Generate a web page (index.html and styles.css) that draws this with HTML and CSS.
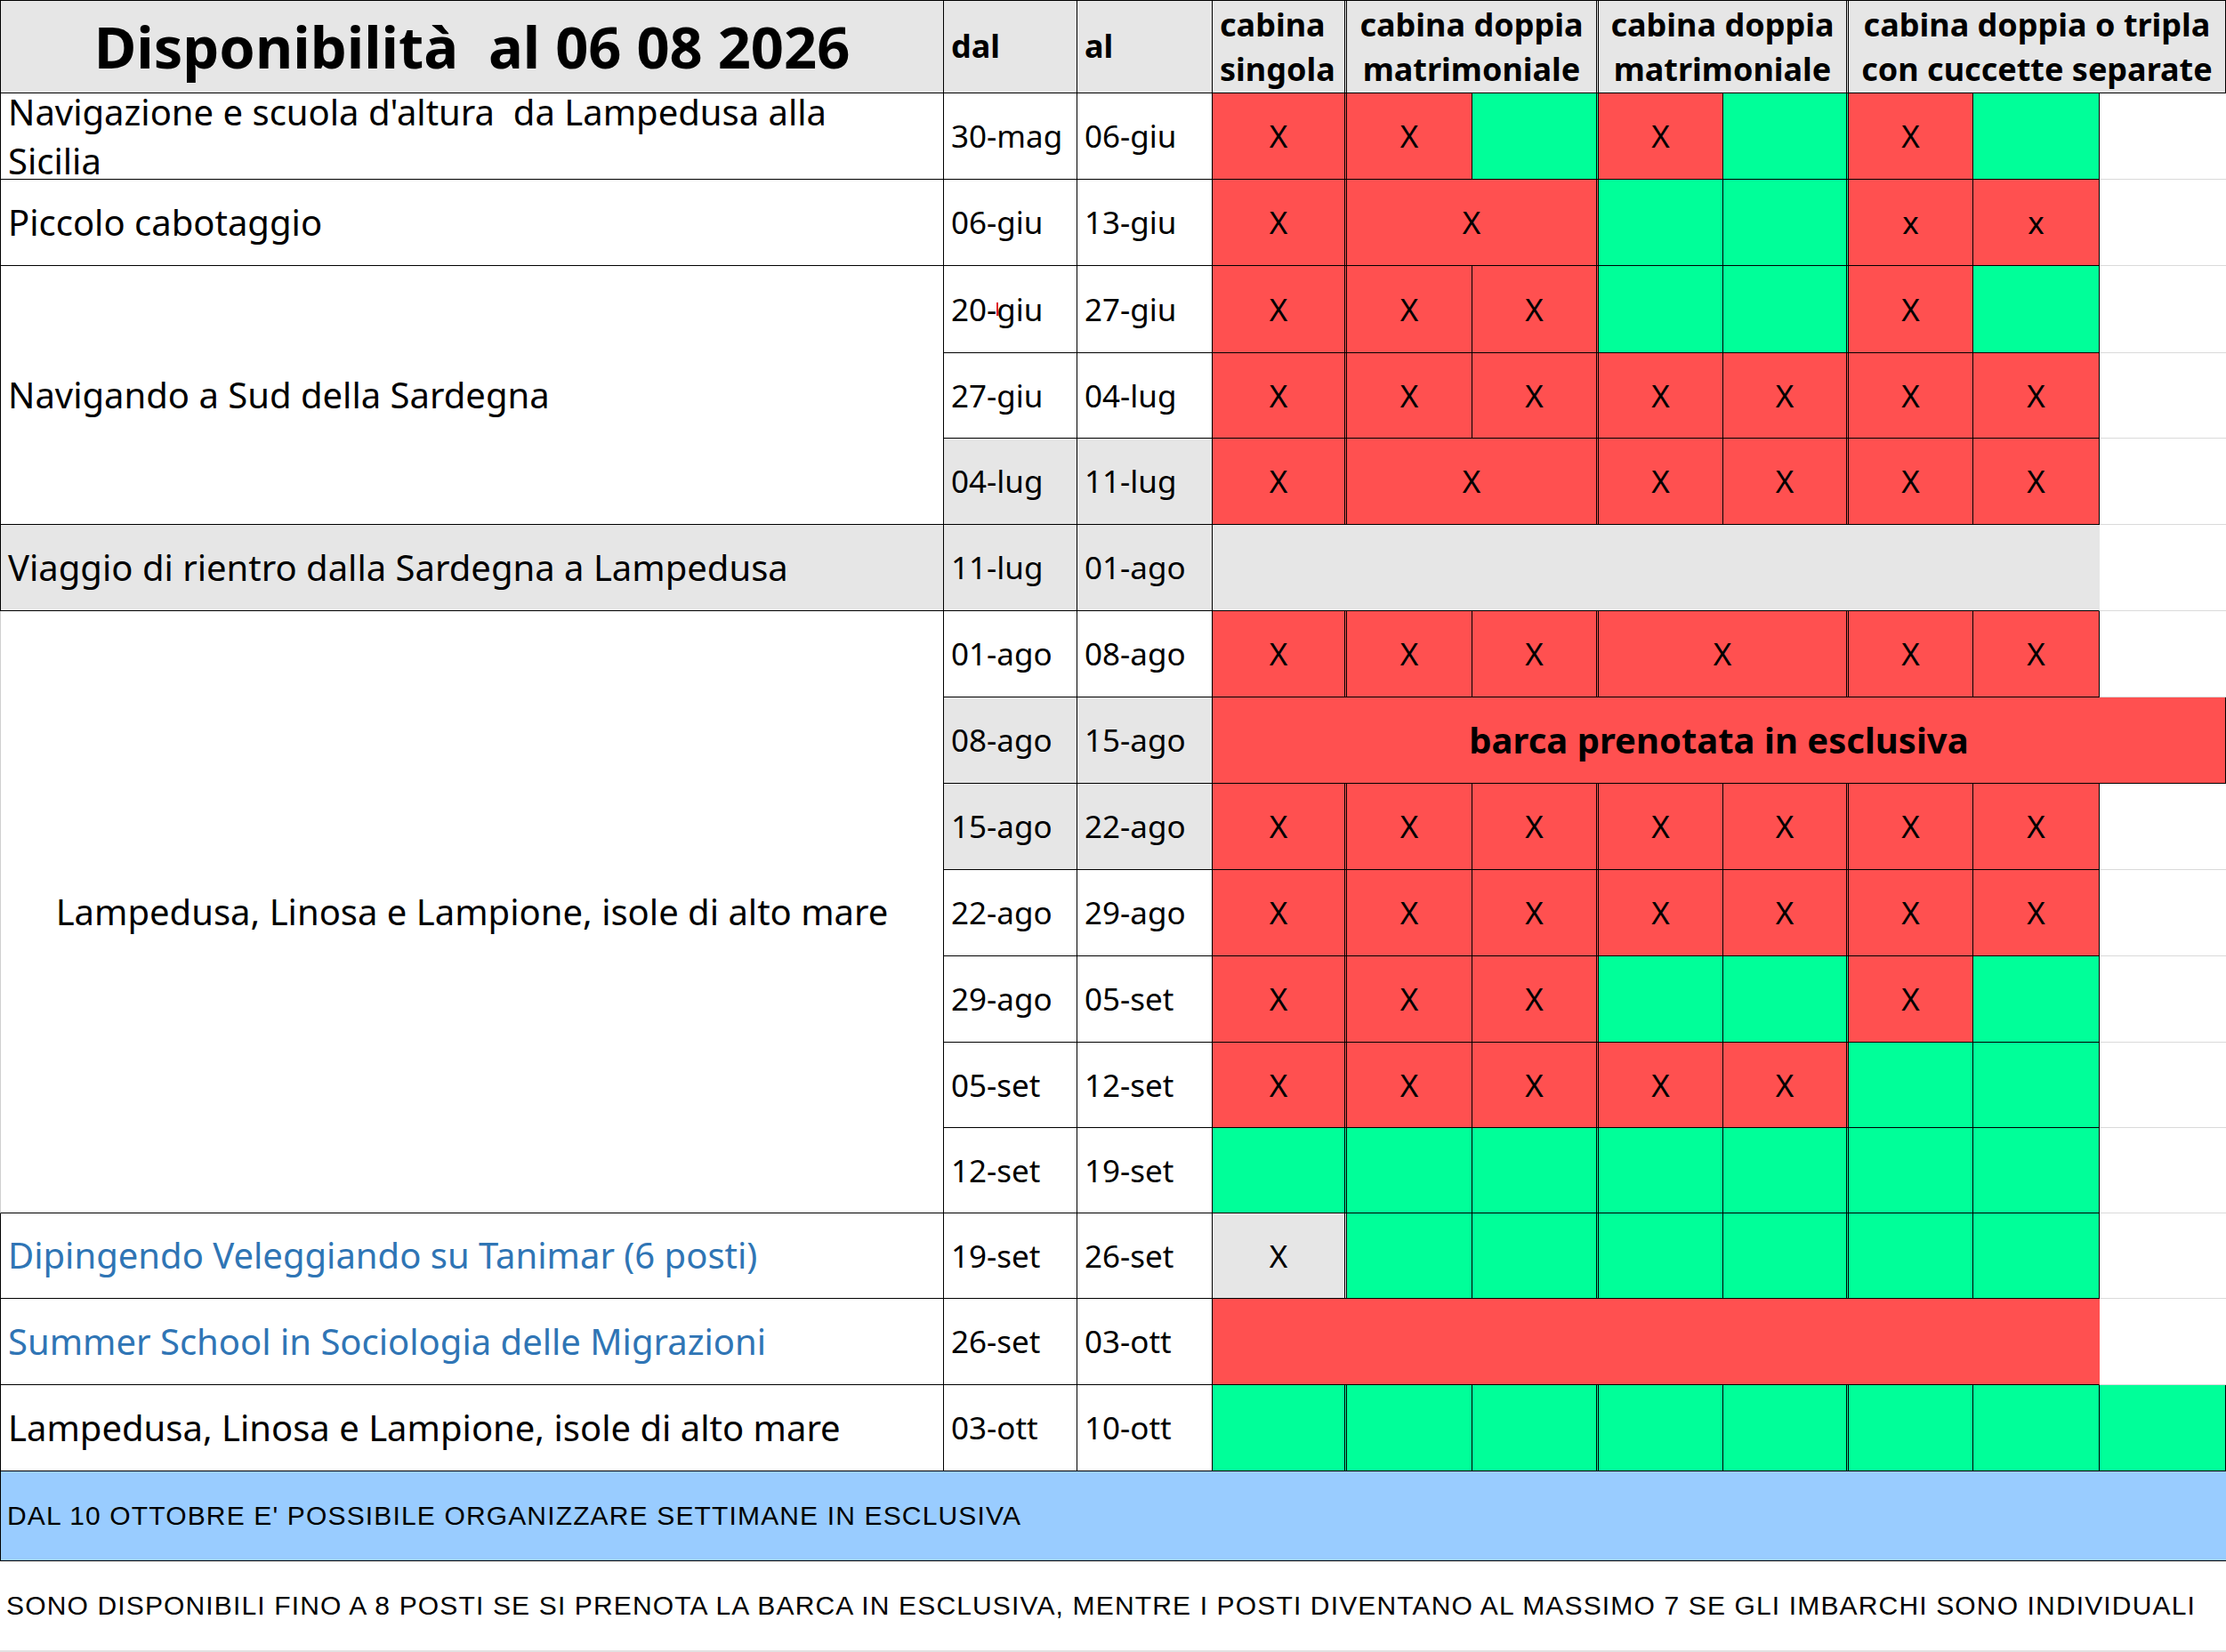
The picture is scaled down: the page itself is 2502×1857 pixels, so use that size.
FILE: index.html
```html
<!DOCTYPE html>
<html lang="it">
<head>
<meta charset="utf-8">
<title>Disponibilità</title>
<link rel="stylesheet" href="styles.css">
</head>
<body>
<div class="sheet">
  <!-- header -->
  <div class="cell a hd title">Disponibilità&nbsp; al 06 08 2026</div>
  <div class="cell hd">dal</div>
  <div class="cell hd">al</div>
  <div class="cell hd two gb">cabina<br>singola</div>
  <div class="cell hd two ctr s2 gb">cabina doppia<br>matrimoniale</div>
  <div class="cell hd two ctr s2 gb">cabina doppia<br>matrimoniale</div>
  <div class="cell hd two ctr s3">cabina doppia o tripla<br>con cuccette separate</div>

  <!-- r1 -->
  <div class="cell a t wrap">Navigazione e scuola d'altura&nbsp; da Lampedusa alla<br>Sicilia</div>
  <div class="cell">30-mag</div>
  <div class="cell">06-giu</div>
  <div class="cell r x gb">X</div>
  <div class="cell r x">X</div>
  <div class="cell g gb"></div>
  <div class="cell r x">X</div>
  <div class="cell g gb"></div>
  <div class="cell r x">X</div>
  <div class="cell g"></div>
  <div class="cell k"></div>

  <!-- r2 -->
  <div class="cell a t">Piccolo cabotaggio</div>
  <div class="cell">06-giu</div>
  <div class="cell">13-giu</div>
  <div class="cell r x gb">X</div>
  <div class="cell r x s2 gb">X</div>
  <div class="cell g"></div>
  <div class="cell g gb"></div>
  <div class="cell r x">x</div>
  <div class="cell r x">x</div>
  <div class="cell k"></div>

  <!-- r3 -->
  <div class="cell a t rs3">Navigando a Sud della Sardegna</div>
  <div class="cell">20-<span class="mark"></span>giu</div>
  <div class="cell">27-giu</div>
  <div class="cell r x gb">X</div>
  <div class="cell r x">X</div>
  <div class="cell r x gb">X</div>
  <div class="cell g"></div>
  <div class="cell g gb"></div>
  <div class="cell r x">X</div>
  <div class="cell g"></div>
  <div class="cell k"></div>

  <!-- r4 -->
  <div class="cell">27-giu</div>
  <div class="cell">04-lug</div>
  <div class="cell r x gb">X</div>
  <div class="cell r x">X</div>
  <div class="cell r x gb">X</div>
  <div class="cell r x">X</div>
  <div class="cell r x gb">X</div>
  <div class="cell r x">X</div>
  <div class="cell r x">X</div>
  <div class="cell k"></div>

  <!-- r5 -->
  <div class="cell gy">04-lug</div>
  <div class="cell gy">11-lug</div>
  <div class="cell r x gb">X</div>
  <div class="cell r x s2 gb">X</div>
  <div class="cell r x">X</div>
  <div class="cell r x gb">X</div>
  <div class="cell r x">X</div>
  <div class="cell r x">X</div>
  <div class="cell k"></div>

  <!-- r6 -->
  <div class="cell a t gy">Viaggio di rientro dalla Sardegna a Lampedusa</div>
  <div class="cell gy">11-lug</div>
  <div class="cell gy">01-ago</div>
  <div class="cell gy s7 nor"></div>
  <div class="cell k"></div>

  <!-- r7 -->
  <div class="cell a t rs7 ctr soft">Lampedusa, Linosa e Lampione, isole di alto mare</div>
  <div class="cell">01-ago</div>
  <div class="cell">08-ago</div>
  <div class="cell r x gb">X</div>
  <div class="cell r x">X</div>
  <div class="cell r x gb">X</div>
  <div class="cell r x s2 gb">X</div>
  <div class="cell r x">X</div>
  <div class="cell r x">X</div>
  <div class="cell k"></div>

  <!-- r8 -->
  <div class="cell gy">08-ago</div>
  <div class="cell gy">15-ago</div>
  <div class="cell r x s8 bold">barca prenotata in esclusiva</div>

  <!-- r9 -->
  <div class="cell gy">15-ago</div>
  <div class="cell gy">22-ago</div>
  <div class="cell r x gb">X</div>
  <div class="cell r x">X</div>
  <div class="cell r x gb">X</div>
  <div class="cell r x">X</div>
  <div class="cell r x gb">X</div>
  <div class="cell r x">X</div>
  <div class="cell r x">X</div>
  <div class="cell k"></div>

  <!-- r10 -->
  <div class="cell">22-ago</div>
  <div class="cell">29-ago</div>
  <div class="cell r x gb">X</div>
  <div class="cell r x">X</div>
  <div class="cell r x gb">X</div>
  <div class="cell r x">X</div>
  <div class="cell r x gb">X</div>
  <div class="cell r x">X</div>
  <div class="cell r x">X</div>
  <div class="cell k"></div>

  <!-- r11 -->
  <div class="cell">29-ago</div>
  <div class="cell">05-set</div>
  <div class="cell r x gb">X</div>
  <div class="cell r x">X</div>
  <div class="cell r x gb">X</div>
  <div class="cell g"></div>
  <div class="cell g gb"></div>
  <div class="cell r x">X</div>
  <div class="cell g"></div>
  <div class="cell k"></div>

  <!-- r12 -->
  <div class="cell">05-set</div>
  <div class="cell">12-set</div>
  <div class="cell r x gb">X</div>
  <div class="cell r x">X</div>
  <div class="cell r x gb">X</div>
  <div class="cell r x">X</div>
  <div class="cell r x gb">X</div>
  <div class="cell g"></div>
  <div class="cell g"></div>
  <div class="cell k"></div>

  <!-- r13 -->
  <div class="cell">12-set</div>
  <div class="cell">19-set</div>
  <div class="cell g gb"></div>
  <div class="cell g"></div>
  <div class="cell g gb"></div>
  <div class="cell g"></div>
  <div class="cell g gb"></div>
  <div class="cell g"></div>
  <div class="cell g"></div>
  <div class="cell k"></div>

  <!-- r14 -->
  <div class="cell a t blue">Dipingendo Veleggiando su Tanimar (6 posti)</div>
  <div class="cell">19-set</div>
  <div class="cell">26-set</div>
  <div class="cell gy x gb">X</div>
  <div class="cell g"></div>
  <div class="cell g gb"></div>
  <div class="cell g"></div>
  <div class="cell g gb"></div>
  <div class="cell g"></div>
  <div class="cell g"></div>
  <div class="cell k"></div>

  <!-- r15 -->
  <div class="cell a t blue">Summer School in Sociologia delle Migrazioni</div>
  <div class="cell">26-set</div>
  <div class="cell">03-ott</div>
  <div class="cell r s7 nor"></div>
  <div class="cell k"></div>

  <!-- r16 -->
  <div class="cell a t">Lampedusa, Linosa e Lampione, isole di alto mare</div>
  <div class="cell">03-ott</div>
  <div class="cell">10-ott</div>
  <div class="cell g gb"></div>
  <div class="cell g"></div>
  <div class="cell g gb"></div>
  <div class="cell g"></div>
  <div class="cell g gb"></div>
  <div class="cell g"></div>
  <div class="cell g"></div>
  <div class="cell g"></div>
</div>

<div class="band blueband">DAL 10 OTTOBRE E' POSSIBILE ORGANIZZARE SETTIMANE IN ESCLUSIVA</div>
<div class="band note">SONO DISPONIBILI FINO A 8 POSTI SE SI PRENOTA LA BARCA IN ESCLUSIVA, MENTRE I POSTI DIVENTANO AL MASSIMO 7 SE GLI IMBARCHI SONO INDIVIDUALI</div>
</body>
</html>
```

FILE: styles.css
```css
* { box-sizing: border-box; }

html, body {
  margin: 0;
  padding: 0;
  background: #ffffff;
}

body {
  width: 2502px;
  font-family: "Noto Sans", "Open Sans", sans-serif;
  color: #000;
}

.sheet {
  display: grid;
  grid-template-columns: 1061px 150px 152px 151px 141px 142px 140px 141px 140px 142px 142px;
  grid-template-rows: 105px 97px 97px 98px 96px 97px 97px 97px 97px 97px 97px 97px 96px 96px 96px 97px 97px;
}

.cell {
  display: flex;
  align-items: center;
  padding: 0 8px;
  border-right: 1px solid #000;
  border-bottom: 1px solid #000;
  white-space: nowrap;
  overflow: hidden;
  font-size: 35px;
  line-height: 1.36;
  background: #fff;
}

.a { border-left: 1px solid #000; }
.t { font-size: 40px; }
.soft { border-left-color: #cfcfcf; }

.hd {
  background: #e6e6e6;
  border-top: 1px solid #000;
  font-weight: 700;
  font-size: 36px;
}

.title {
  font-size: 65px;
  justify-content: center;
}

.two {
  white-space: normal;
  line-height: 50px;
}

.wrap {
  white-space: normal;
  line-height: 55px;
  overflow: visible;
}

.ctr {
  justify-content: center;
  text-align: center;
  padding: 0 4px;
}

.x { justify-content: center; }
.bold { font-weight: 700; font-size: 40px; }

.r { background: #ff5050; }
.g { background: #00ff99; }
.gy { background: #e6e6e6; }
.blue { color: #2f75b5; }

.gb { border-right: 3px double #000; }
.nor { border-right-color: transparent; }

.k {
  border-right: none;
  border-bottom: 1px solid #dadada;
}

.s2 { grid-column: span 2; }
.s3 { grid-column: span 3; }
.s7 { grid-column: span 7; }
.s8 { grid-column: span 8; }
.rs3 { grid-row: span 3; }
.rs7 { grid-row: span 7; }

.mark {
  display: inline-block;
  width: 2px;
  height: 15px;
  background: #e0202a;
  margin-left: 0;
  margin-right: -2px;
  vertical-align: -8px;
}

.band {
  display: flex;
  align-items: center;
  padding-left: 7px;
  font-family: "Liberation Sans", Arial, sans-serif;
  font-size: 30px;
  letter-spacing: 1.15px;
  white-space: nowrap;
}

.blueband {
  height: 101px;
  background: #99ccff;
  border-left: 1px solid #000;
  border-bottom: 1px solid #000;
}

.note {
  height: 102px;
  border-bottom: 2px solid #e2e2e2;
}
```
